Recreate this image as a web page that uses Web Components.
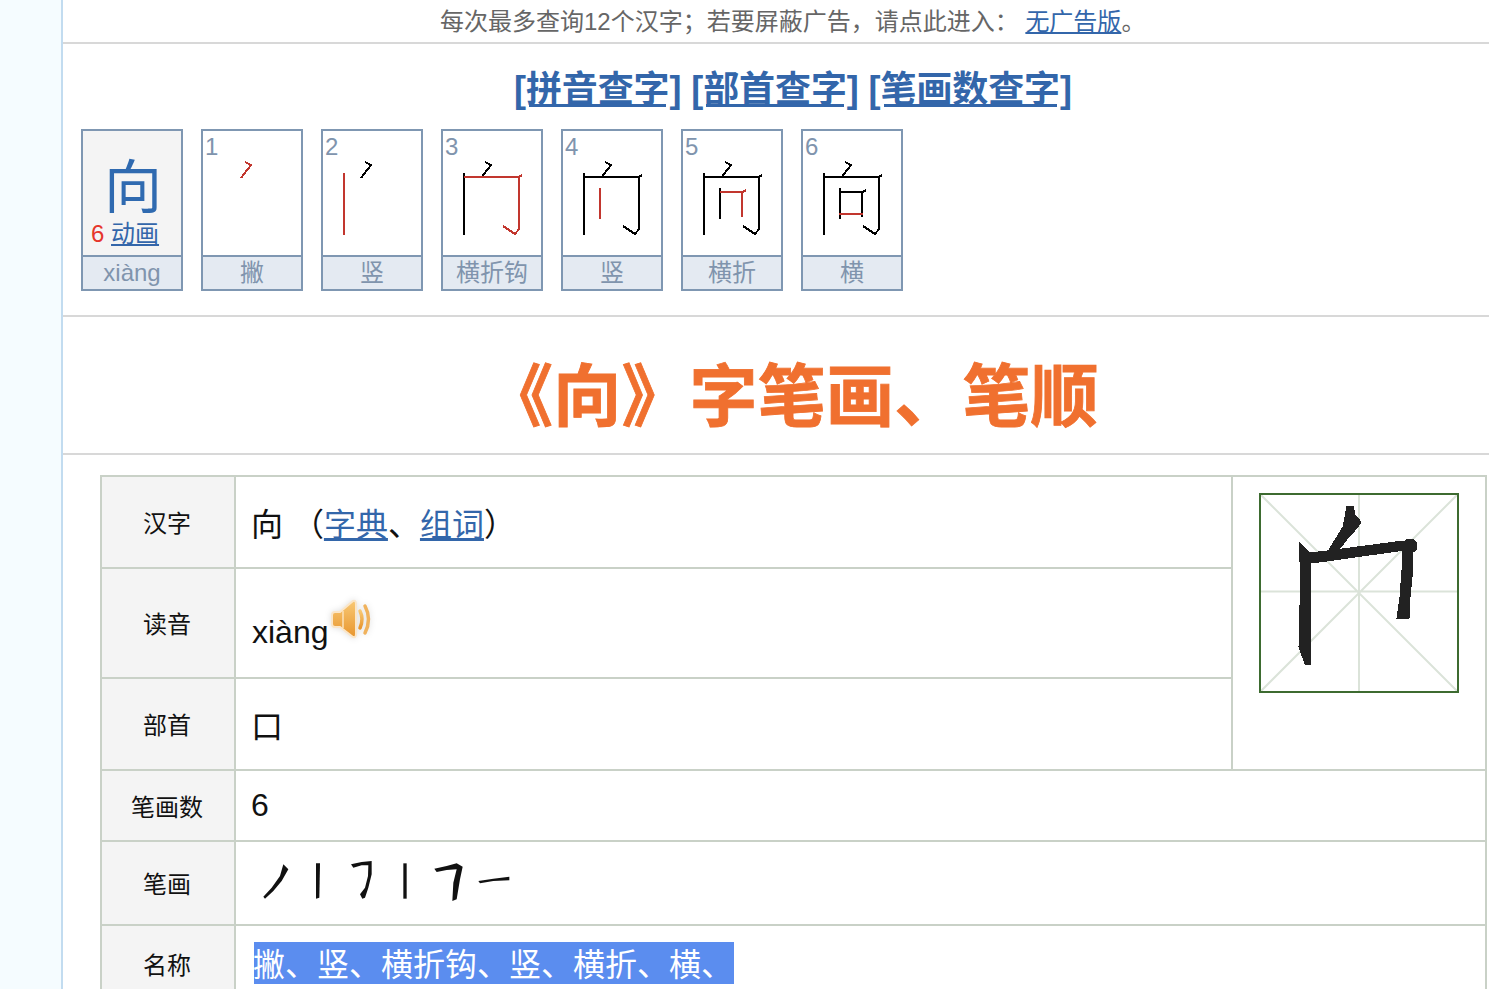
<!DOCTYPE html>
<html lang="zh">
<head>
<meta charset="utf-8">
<title>向字笔画</title>
<style>
    html, body { margin: 0; height: 100%; overflow: hidden; background: #fff; }
    body {
        display: flex;
        font-family: "Liberation Sans", "Noto Sans CJK SC", sans-serif;
        --link: #3366aa;
        --rule: #d8d8d8;
    }
    main { flex: 1; min-width: 0; }
</style>
</head>
<body>
<side-rail></side-rail>
<main>
    <notice-bar>每次最多查询12个汉字；若要屏蔽广告，请点此进入： <a>无广告版</a>。</notice-bar>
    <search-links></search-links>
    <stroke-strip data-names="撇,竖,横折钩,竖,横折,横" data-pinyin="xiàng" data-char="向"></stroke-strip>
    <page-title>《向》字笔画、笔顺</page-title>
    <char-table></char-table>
</main>

<script>
/* Thin pale column down the left of the page. */
class SideRail extends HTMLElement {
    constructor() {
        super();
        this.attachShadow({ mode: 'open' }).innerHTML = `
            <style>
                :host {
                    display: block;
                    flex: none;
                    width: 61px;
                    background: #f5fcff;
                    border-right: 2px solid #c2dcf0;
                }
            </style>`;
    }
}

class NoticeBar extends HTMLElement {
    constructor() {
        super();
        this.attachShadow({ mode: 'open' }).innerHTML = `
            <style>
                :host {
                    display: block;
                    box-sizing: border-box;
                    height: 44px;
                    padding: 5px 0 0 377px;
                    border-bottom: 2px solid var(--rule);
                    font-size: 24px;
                    line-height: 34px;
                    color: #666;
                    white-space: nowrap;
                }
                ::slotted(a) { color: var(--link); text-decoration: underline; }
            </style>
            <slot></slot>`;
    }
}

class SearchLinks extends HTMLElement {
    constructor() {
        super();
        this.attachShadow({ mode: 'open' }).innerHTML = `
            <style>
                :host {
                    display: block;
                    height: 85px;
                    padding-left: 451px;
                    font-size: 36px;
                    font-weight: bold;
                    line-height: 92px;
                    letter-spacing: -0.1px;
                    color: var(--link);
                    white-space: nowrap;
                }
                a { color: inherit; text-decoration: underline; }
            </style>
            <a>[拼音查字]</a> <a>[部首查字]</a> <a>[笔画数查字]</a>`;
    }
}

// The six strokes of 向, as drawn inside a stroke card (card-relative px).
const STROKES = [
    'M44 33 L50 36 L40 49',
    'M23 44 V106',
    'M23 48 H78 L81 46 M78 48 V100 L74 105 L62 97',
    'M39 59 V90',
    'M39 63 H62 L65 61 M61 63 V88',
    'M38 85 H62',
];

/* One box of the stroke-order strip: the character so far, with the newest stroke in red. */
class StrokeCard extends HTMLElement {
    static get observedAttributes() { return ['data-step', 'data-name']; }

    constructor() {
        super();
        this.attachShadow({ mode: 'open' });
    }

    connectedCallback() {
        const step = Number(this.getAttribute('data-step'));
        const name = this.getAttribute('data-name');
        const paths = STROKES.slice(0, step).map((d, i) =>
            `<path d="${d}" stroke="${i === step - 1 ? '#c2362e' : '#000'}"/>`).join('');
        this.shadowRoot.innerHTML = `
            <style>
                :host {
                    display: flex;
                    flex-direction: column;
                    box-sizing: border-box;
                    width: 102px;
                    height: 162px;
                    border: 2px solid #7f97b2;
                    color: #8094ad;
                }
                .pic { flex: 1; position: relative; }
                .num { position: absolute; left: 2px; top: 0; font-size: 24px; line-height: 32px; }
                svg { position: absolute; left: -2px; top: -2px; }
                path { fill: none; stroke-width: 2; }
                .cap {
                    height: 34px;
                    box-sizing: border-box;
                    border-top: 2px solid #7f97b2;
                    background: #e4eaf2;
                    font-size: 24px;
                    line-height: 31px;
                    text-align: center;
                }
            </style>
            <div class="pic">
                <svg width="102" height="126" shape-rendering="crispEdges">${paths}</svg>
                <span class="num">${step}</span>
            </div>
            <div class="cap">${name}</div>`;
    }
}

/* First box of the strip: big character, stroke count, animation link. */
class CharCard extends HTMLElement {
    constructor() {
        super();
        this.attachShadow({ mode: 'open' });
    }

    connectedCallback() {
        this.shadowRoot.innerHTML = `
            <style>
                :host {
                    display: flex;
                    flex-direction: column;
                    box-sizing: border-box;
                    width: 102px;
                    height: 162px;
                    border: 2px solid #7f97b2;
                    color: #8094ad;
                }
                .pic { flex: 1; background: #f4f4f4; min-height: 0; }
                .big { font-size: 58px; line-height: 60px; height: 60px; margin-top: 27px; padding-left: 21px; color: #2f6ab0; }
                .sub { font-size: 24px; line-height: 30px; white-space: nowrap; padding-left: 8px; margin-top: 1px; }
                .sub b { font-weight: normal; color: #e6352b; }
                .sub a { color: var(--link); text-decoration: underline; }
                .cap {
                    height: 34px;
                    box-sizing: border-box;
                    border-top: 2px solid #7f97b2;
                    background: #e4eaf2;
                    font-size: 24px;
                    line-height: 31px;
                    text-align: center;
                }
            </style>
            <div class="pic">
                <div class="big">${this.getAttribute('data-char')}</div>
                <div class="sub"><b>6</b> <a>动画</a></div>
            </div>
            <div class="cap">${this.getAttribute('data-pinyin')}</div>`;
    }
}

class StrokeStrip extends HTMLElement {
    constructor() {
        super();
        this.attachShadow({ mode: 'open' });
    }

    connectedCallback() {
        const names = (this.getAttribute('data-names') || '').split(',');
        this.shadowRoot.innerHTML = `
            <style>
                :host {
                    display: flex;
                    gap: 18px;
                    box-sizing: border-box;
                    height: 188px;
                    padding: 0 0 0 18px;
                    border-bottom: 2px solid var(--rule);
                }
                stroke-card, char-card { flex: none; }
            </style>
            <char-card data-char="${this.getAttribute('data-char')}" data-pinyin="${this.getAttribute('data-pinyin')}"></char-card>
            ${names.map((n, i) => `<stroke-card data-step="${i + 1}" data-name="${n}"></stroke-card>`).join('')}`;
    }
}

class PageTitle extends HTMLElement {
    constructor() {
        super();
        this.attachShadow({ mode: 'open' }).innerHTML = `
            <style>
                :host {
                    display: block;
                    box-sizing: border-box;
                    height: 138px;
                    padding-left: 422px;
                    border-bottom: 2px solid var(--rule);
                    font-size: 68px;
                    font-weight: bold;
                    -webkit-text-stroke: 0.8px #f0702f;
                    letter-spacing: 0.2px;
                    line-height: 160px;
                    color: #f0702f;
                    white-space: nowrap;
                }
            </style>
            <slot></slot>`;
    }
}

/* Speaker icon next to the pinyin. */
const SPEAKER = `
    <svg class="speaker" width="48" height="42" viewBox="0 0 48 42">
        <defs>
            <linearGradient id="sp" x1="0" y1="0" x2="0" y2="1">
                <stop offset="0" stop-color="#f8c874"/>
                <stop offset="1" stop-color="#e8962f"/>
            </linearGradient>
        </defs>
        <path d="M7 13 Q4 13 4 16 V25 Q4 28 7 28 H12 L25 38 Q28 39 28 35 V5 Q28 1 25 2 L12 13 Z" fill="url(#sp)" stroke="#fbe6c8" stroke-width="2"/>
        <path d="M15 12 V29" stroke="#fbe2bb" stroke-width="1.5"/>
        <path d="M32 12 Q36 20 32 29" fill="none" stroke="url(#sp)" stroke-width="3.500" stroke-linecap="round"/>
        <path d="M37 7 Q44 20 37 34" fill="none" stroke="#f0b25c" stroke-width="3.500" stroke-linecap="round"/>
    </svg>`;

/* Sample of the hand-written glyph on its 米 grid. */
const GLYPH = `
    <svg width="200" height="200" viewBox="0 0 200 200" style="display:block">
        <g stroke="#dbe3d9" stroke-width="2" fill="none">
            <path d="M2 2 L198 198 M198 2 L2 198 M100 2 V198 M2 98.500 H198"/>
        </g>
        <rect x="1" y="1" width="198" height="198" fill="none" stroke="#3d6b30" stroke-width="2"/>
        <g fill="#222" stroke="#222" shape-rendering="crispEdges">
            <path d="M40 49 L51 60 L52 171 L46 171 L40 154 L42 70 L40 67 Z"/>
            <path d="M50 60 L68 58 L144 48 L146 57 L68 68 L52 70 Z"/>
            <circle cx="151" cy="53" r="7"/>
            <path d="M143 57 H154 L153.700 77 L151 104 L150 125 H138 L141 104 L143 77 Z"/>
            <path d="M88 13 H94 L96 22 L102 29 L98 35 L89 45 L78 59 L68 60 L84 34 L86 24 Z"/>
        </g>
    </svg>`;

const STROKE_ROW = `
    <svg width="260" height="50" viewBox="60 30 780 150" style="display:block;margin:-5px 0 0 9px">
        <g fill="#111">
            <path d="M130 55 L145 70 L125 105 L100 135 L75 158 L70 152 L95 125 L120 90 Z"/>
            <path d="M228 52 L240 52 L238 155 L228 158 Z"/>
            <path d="M333 55 L365 48 L395 45 L395 85 L385 125 L375 155 L367 158 L360 145 L375 125 L384 90 L385 58 L365 58 L340 65 Z"/>
            <path d="M490 52 L500 52 L500 158 L490 158 Z"/>
            <path d="M583 68 L620 60 L650 52 L668 62 L660 100 L650 160 L637 165 L640 110 L650 70 L620 72 L590 78 Z"/>
            <path d="M715 105 L760 98 L808 92 L808 103 L760 105 L720 112 Z"/>
        </g>
    </svg>`;

class CharTable extends HTMLElement {
    constructor() {
        super();
        this.attachShadow({ mode: 'open' }).innerHTML = `
            <style>
                :host { display: block; margin: 20px 0 0 37px; width: 1385px; }
                table { border-collapse: collapse; table-layout: fixed; width: 100%; }
                td {
                    border: 2px solid #c9d1c7;
                    padding: 0 16px 0 15px;
                    font-size: 32px;
                    line-height: 44px;
                    color: #111;
                    white-space: nowrap;
                }
                td.k { background: #f4f4f4; font-size: 24px; text-align: center; padding: 4px 2px 0 0; }
                td.k.last { padding-top: 2px; }
                td.img { padding: 0 26px; vertical-align: top; }
                td.img > div { margin-top: 16px; }
                td.up { padding-top: 6px; }
                td.low { padding-bottom: 2px; }
                td.pin { padding-left: 16px; padding-top: 8px; }
                td.name { padding-bottom: 4px; }
                a { color: var(--link); text-decoration: underline; }
                .speaker { vertical-align: 0; margin-left: -9px; position: relative; top: -2px; filter: drop-shadow(0 0 3px #ddd); }
                .sel {
                    display: inline-block;
                    box-sizing: border-box;
                    width: 480px;
                    height: 42px;
                    padding-top: 4px;
                    background: #5b8def;
                    color: #fff;
                    line-height: 38px;
                    text-indent: -1px;
                    margin: 1px 0 0 3px;
                    vertical-align: top;
                }
            </style>
            <table>
                <colgroup><col style="width:134px"><col style="width:997px"><col style="width:254px"></colgroup>
                <tr style="height:92px"><td class="k">汉字</td><td class="up">向 （<a>字典</a>、<a>组词</a>）</td>
                    <td class="img" rowspan="3"><div>${GLYPH}</div></td></tr>
                <tr style="height:110px"><td class="k">读音</td><td class="pin">xiàng${SPEAKER}</td></tr>
                <tr style="height:92px"><td class="k">部首</td><td class="up">口</td></tr>
                <tr style="height:71px"><td class="k">笔画数</td><td class="low" colspan="2">6</td></tr>
                <tr style="height:84px"><td class="k">笔画</td><td colspan="2">${STROKE_ROW}</td></tr>
                <tr style="height:80px"><td class="k last">名称</td><td class="name" colspan="2"><span class="sel">撇、竖、横折钩、竖、横折、横、</span></td></tr>
            </table>`;
    }
}

customElements.define('side-rail', SideRail);
customElements.define('notice-bar', NoticeBar);
customElements.define('search-links', SearchLinks);
customElements.define('stroke-card', StrokeCard);
customElements.define('char-card', CharCard);
customElements.define('stroke-strip', StrokeStrip);
customElements.define('page-title', PageTitle);
customElements.define('char-table', CharTable);
</script>
</body>
</html>
